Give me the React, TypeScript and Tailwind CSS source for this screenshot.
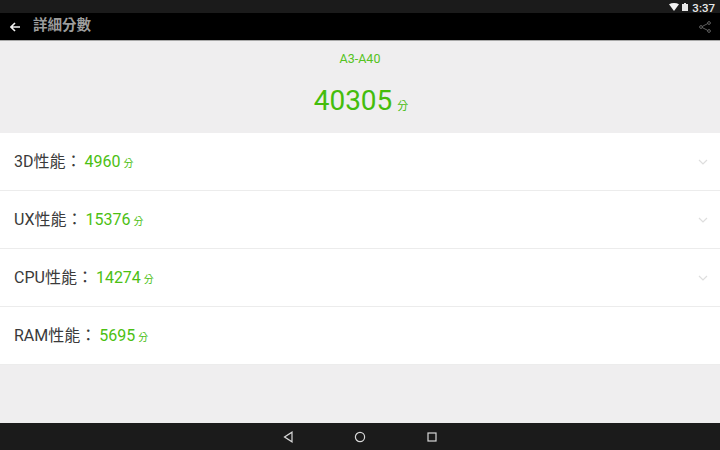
const FONT = "font-['Roboto','Noto_Sans_CJK_TC',sans-serif]"

const ROWS = [
  { label: '3D性能：', score: '4960', expandable: true },
  { label: 'UX性能：', score: '15376', expandable: true },
  { label: 'CPU性能：', score: '14274', expandable: true },
  { label: 'RAM性能：', score: '5695', expandable: false },
]

function Chevron() {
  return (
    <svg width="10" height="6" viewBox="0 0 10 6" fill="none" stroke="#dedede" strokeWidth="1.2">
      <path d="M1 1l4 4 4-4" />
    </svg>
  )
}

export default function App() {
  return (
    <div className={`${FONT} flex h-[450px] w-[720px] flex-col overflow-hidden bg-[#efeeef]`}>
      {/* Status bar */}
      <div className="flex h-[13px] items-start justify-end bg-[#1b1b1b] pt-[3px] pr-[5px] text-[#e8e8e8]">
        <svg width="10" height="8" viewBox="0 0 10 8" fill="#f2f2f2" className="mr-[3px]">
          <path d="M0 1.2C3 -.4 7 -.4 10 1.2L5 8z" />
        </svg>
        <svg width="6" height="8" viewBox="0 0 6 8" fill="#e8e8e8" className="mr-[4px]">
          <path d="M2 0h2v1h2v7H0V1h2z" />
        </svg>
        <span className="text-[11.5px] leading-[10px] font-medium">3:37</span>
      </div>

      {/* Action bar */}
      <div className="flex h-[27px] items-center bg-black pr-[9px] pl-[10px]">
        <svg width="10" height="10" viewBox="0 0 10 10" fill="none" stroke="#f2f2f2" strokeWidth="1.6">
          <path d="M10 5H1.2M5 1L1 5l4 4" />
        </svg>
        <span className="ml-[13px] text-[14.5px] leading-none font-bold text-[#9c9c9c]">詳細分數</span>
        <svg width="12" height="12" viewBox="0 0 12 12" fill="none" stroke="#777" strokeWidth="0.8" className="ml-auto">
          <circle cx="2" cy="6" r="1.4" />
          <circle cx="10" cy="2" r="1.4" />
          <circle cx="10" cy="10" r="1.4" />
          <path d="M3.3 5.4l5.4-2.8M3.3 6.6l5.4 2.8" />
        </svg>
      </div>
      <div className="h-px bg-[#a8a8a8]" />

      {/* Total */}
      <div className="flex h-[92px] flex-col items-center bg-[#efeeef] pt-[10px]">
        <span className="text-[12.5px] leading-[16px] text-[#54c322]">A3-A40</span>
        <div className="mt-[16px] ml-[2px] flex items-baseline text-[#44bd0c]">
          <span className="text-[28px] leading-[36px]">40305</span>
          <span className="ml-[5px] text-[11px] leading-none">分</span>
        </div>
      </div>

      {/* Score rows */}
      <div className="flex flex-col">
        {ROWS.map((row) => (
          <div key={row.label} className="flex h-[58px] items-center border-b border-[#ececec] bg-white pr-[12px] pl-[14px]">
            <span className="text-[16px] leading-none text-[#3a3a3a]">{row.label}</span>
            <span className="ml-[3px] text-[16px] leading-none text-[#4cc013]">{row.score}</span>
            <span className="mt-[5px] ml-[3px] text-[10px] leading-none text-[#4cc013]">分</span>
            {row.expandable && (
              <span className="ml-auto">
                <Chevron />
              </span>
            )}
          </div>
        ))}
      </div>

      <div className="flex-1" />

      {/* Navigation bar */}
      <div className="flex h-[27px] items-center justify-center gap-[56px] bg-[#1b1b1b]">
        <svg width="16" height="12" viewBox="0 0 16 12" fill="none" stroke="#d8d8d8" strokeWidth="1.2">
          <path d="M12 1.2v9.6L4.5 6z" />
        </svg>
        <svg width="16" height="12" viewBox="0 0 16 12" fill="none" stroke="#d8d8d8" strokeWidth="1.2">
          <circle cx="8" cy="6" r="4.6" />
        </svg>
        <svg width="16" height="12" viewBox="0 0 16 12" fill="none" stroke="#d8d8d8" strokeWidth="1.2">
          <rect x="4" y="2" width="8" height="8" />
        </svg>
      </div>
    </div>
  )
}
